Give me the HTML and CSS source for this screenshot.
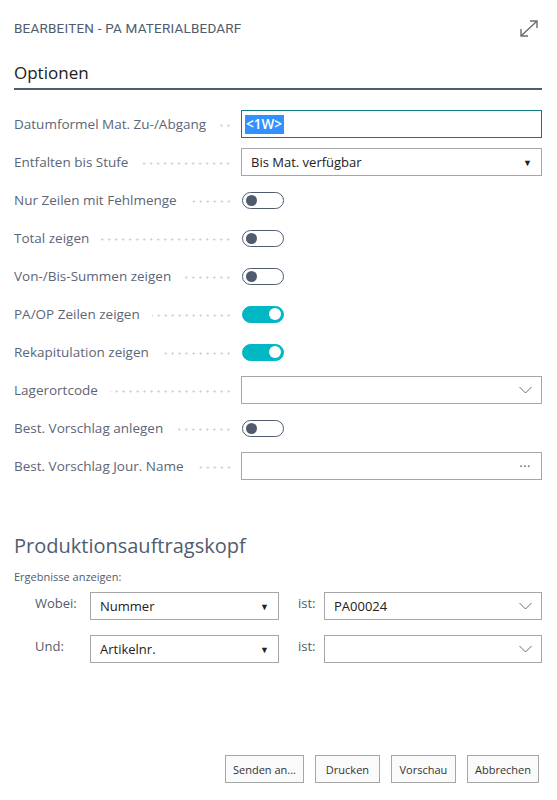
FILE: index.html
```html
<!DOCTYPE html>
<html lang="de">
<head>
<meta charset="utf-8">
<title>Bearbeiten - PA Materialbedarf</title>
<link rel="stylesheet" href="styles.css">
</head>
<body>
<div class="dialog">
  <header class="dialog-head">
    <h1 class="dialog-title">BEARBEITEN - PA MATERIALBEDARF</h1>
    <svg class="expand" width="22" height="21" viewBox="0 0 22 21" aria-hidden="true">
      <path d="M3 18 L19 3 M12 3 H19 V10 M3 11 V18 H10" fill="none" stroke="#6d6d6d" stroke-width="1.4"/>
    </svg>
  </header>

  <section class="group">
    <h2 class="group-title">Optionen</h2>
    <div class="fields">
      <div class="field">
        <label class="caption"><span>Datumformel Mat. Zu-/Abgang</span><i class="leader"></i></label>
        <div class="box box-focus"><span class="sel">&lt;1W&gt;</span></div>
      </div>
      <div class="field">
        <label class="caption"><span>Entfalten bis Stufe</span><i class="leader"></i></label>
        <div class="box"><span class="val">Bis Mat. verfügbar</span><span class="tri">&#9660;</span></div>
      </div>
      <div class="field">
        <label class="caption"><span>Nur Zeilen mit Fehlmenge</span><i class="leader"></i></label>
        <div class="switch"></div>
      </div>
      <div class="field">
        <label class="caption"><span>Total zeigen</span><i class="leader"></i></label>
        <div class="switch"></div>
      </div>
      <div class="field">
        <label class="caption"><span>Von-/Bis-Summen zeigen</span><i class="leader"></i></label>
        <div class="switch"></div>
      </div>
      <div class="field">
        <label class="caption"><span>PA/OP Zeilen zeigen</span><i class="leader"></i></label>
        <div class="switch on"></div>
      </div>
      <div class="field">
        <label class="caption"><span>Rekapitulation zeigen</span><i class="leader"></i></label>
        <div class="switch on"></div>
      </div>
      <div class="field">
        <label class="caption"><span>Lagerortcode</span><i class="leader"></i></label>
        <div class="box"><span class="val"></span>
          <svg class="chev" width="13" height="8" viewBox="0 0 13 8" aria-hidden="true"><path d="M0.5 1 L6.5 7 L12.5 1" fill="none" stroke="#6d6d6d" stroke-width="1"/></svg>
        </div>
      </div>
      <div class="field">
        <label class="caption"><span>Best. Vorschlag anlegen</span><i class="leader"></i></label>
        <div class="switch"></div>
      </div>
      <div class="field">
        <label class="caption"><span>Best. Vorschlag Jour. Name</span><i class="leader"></i></label>
        <div class="box"><span class="val"></span><span class="more">&middot;&middot;&middot;</span></div>
      </div>
    </div>
  </section>

  <section class="filters">
    <h2 class="filters-title">Produktionsauftragskopf</h2>
    <p class="filters-hint">Ergebnisse anzeigen:</p>
    <div class="filter-grid">
      <span class="f-label">Wobei:</span>
      <div class="box"><span class="val">Nummer</span><span class="tri">&#9660;</span></div>
      <span class="f-label f-is">ist:</span>
      <div class="box"><span class="val">PA00024</span>
        <svg class="chev" width="13" height="8" viewBox="0 0 13 8" aria-hidden="true"><path d="M0.5 1 L6.5 7 L12.5 1" fill="none" stroke="#6d6d6d" stroke-width="1"/></svg>
      </div>
      <span class="f-label">Und:</span>
      <div class="box"><span class="val">Artikelnr.</span><span class="tri">&#9660;</span></div>
      <span class="f-label f-is">ist:</span>
      <div class="box"><span class="val"></span>
        <svg class="chev" width="13" height="8" viewBox="0 0 13 8" aria-hidden="true"><path d="M0.5 1 L6.5 7 L12.5 1" fill="none" stroke="#6d6d6d" stroke-width="1"/></svg>
      </div>
    </div>
  </section>

  <footer class="actions">
    <button class="btn">Senden an...</button>
    <button class="btn">Drucken</button>
    <button class="btn">Vorschau</button>
    <button class="btn">Abbrechen</button>
  </footer>
</div>
</body>
</html>
```

FILE: styles.css
```css
* { box-sizing: border-box; }

html, body {
  margin: 0;
  background: #ffffff;
}

body {
  font-family: "Open Sans", "Noto Sans", sans-serif;
  color: #212121;
}

.dialog {
  width: 557px;
  height: 800px;
  padding: 0 15px 0 14px;
  display: flex;
  flex-direction: column;
}

/* title bar */
.dialog-head {
  display: flex;
  justify-content: space-between;
  align-items: flex-start;
  padding-top: 18px;
  height: 62px;
}

.dialog-title {
  margin: 2px 0 0;
  font-family: Roboto, "Liberation Sans", sans-serif;
  font-size: 13.5px;
  font-weight: 400;
  letter-spacing: 0.2px;
  color: #505c6d;
  line-height: 16px;
}

.expand {
  margin-right: 2px;
}

/* options group */
.group-title {
  margin: 0;
  font-size: 17px;
  font-weight: 400;
  line-height: 22px;
  color: #212121;
  padding-bottom: 4px;
  border-bottom: 2px solid #505c6d;
}

.fields {
  margin-top: 20px;
  display: flex;
  flex-direction: column;
  gap: 10px;
}

.field {
  display: grid;
  grid-template-columns: 218px 1fr;
  column-gap: 9px;
  height: 28px;
  align-items: center;
}

.caption {
  display: flex;
  align-items: center;
  font-size: 13.5px;
  color: #5c6677;
  white-space: nowrap;
  overflow: hidden;
}

.leader {
  flex: 1;
  height: 3px;
  margin-left: 12px;
  margin-top: 3px;
  background-image: radial-gradient(circle, #cacaca 0.9px, transparent 1.2px);
  background-size: 7px 3px;
  background-repeat: repeat-x;
  background-position: right center;
}

.box {
  height: 28px;
  border: 1px solid #a6a6a6;
  background: #fff;
  display: flex;
  align-items: center;
  padding: 0 10px 0 9px;
  font-size: 13px;
  color: #212121;
}

.box-focus {
  border-color: #0d7a7f;
  padding-left: 3px;
}

.sel {
  background: #3390ff;
  color: #fff;
  font-weight: 600;
  font-size: 13.5px;
  line-height: 19px;
  padding: 0 2px 0 1px;
}

.val {
  flex: 1;
}

.tri {
  font-size: 9px;
  color: #212121;
  margin-right: -1px;
}

.chev {
  margin-right: -1px;
}

.more {
  color: #505c6d;
  font-size: 13px;
  letter-spacing: 0.5px;
}

/* toggle switches */
.switch {
  position: relative;
  width: 42px;
  height: 17px;
  border: 1px solid #505c6d;
  border-radius: 9px;
  margin-left: 1px;
}

.switch::after {
  content: "";
  position: absolute;
  left: 3px;
  top: 2px;
  width: 11px;
  height: 11px;
  border-radius: 50%;
  background: #505c6d;
}

.switch.on {
  background: #00b7c3;
  border-color: #00b7c3;
}

.switch.on::after {
  left: auto;
  right: 2px;
  top: 1.5px;
  width: 12px;
  height: 12px;
  background: #fff;
}

/* filter section */
.filters {
  margin-top: 53px;
}

.filters-title {
  margin: 0;
  font-size: 20px;
  font-weight: 400;
  line-height: 26px;
  color: #505c6d;
}

.filters-hint {
  margin: 11px 0 0;
  font-size: 11px;
  line-height: 14px;
  color: #505c6d;
}

.filter-grid {
  margin-top: 8px;
  padding-left: 21px;
  display: grid;
  grid-template-columns: 55px 189px 45px 1fr;
  row-gap: 15px;
  align-items: start;
}

.filter-grid .box {
  height: 28px;
}

.f-label {
  font-size: 13px;
  color: #505c6d;
  line-height: 20px;
  padding-top: 1px;
}

.f-is {
  padding-left: 19px;
}

/* action buttons */
.actions {
  margin-top: auto;
  margin-bottom: 17px;
  display: flex;
  justify-content: flex-end;
  gap: 11px;
  padding-right: 3px;
}

.btn {
  height: 28px;
  padding: 0 7px;
  min-width: 65px;
  border: 1px solid #a6a6a6;
  background: #fafafa;
  font-family: "Open Sans", "Noto Sans", sans-serif;
  font-size: 11px;
  color: #333;
}
```
